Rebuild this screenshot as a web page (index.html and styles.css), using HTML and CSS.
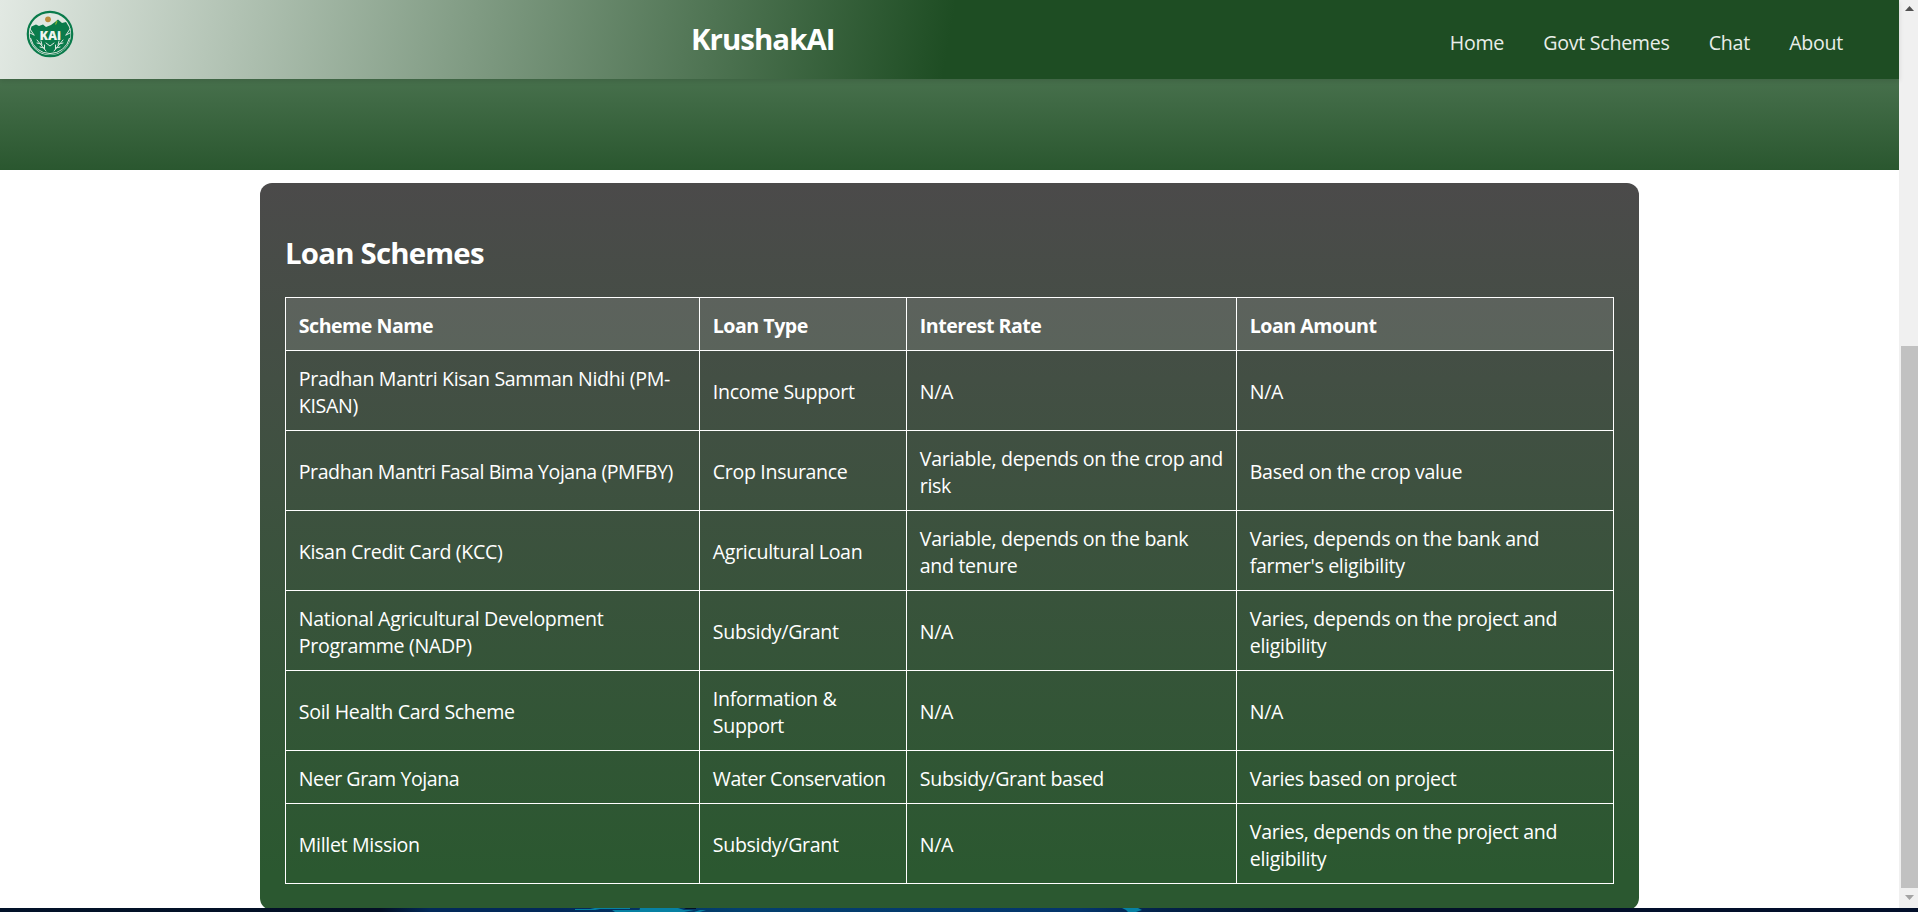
FILE: index.html
```html
<!DOCTYPE html>
<html lang="en">
<head>
<meta charset="utf-8">
<title>KrushakAI</title>
<link rel="stylesheet" href="styles.css">
</head>
<body>
<div class="window">
  <div class="page">
    <header class="header">
      <svg class="logo" viewBox="0 0 48 48">
        <circle cx="24" cy="24" r="22.2" fill="#dfe7e0" stroke="#0a7b4b" stroke-width="2.2"/>
        <path d="M5.500 16.500 L10 14.500 13 16 17 14.500 20 17 25 15 29 12 32 9.500 36 13 40 12 43 17 A20.300 20.300 0 1 1 5.500 16.500Z" fill="#0a7b4b"/>
        <path d="M4.500 28 A20 20 0 0 0 43.500 28" fill="none" stroke="#dfe7e0" stroke-width="1"/>
        <circle cx="22" cy="9.300" r="2.900" fill="#b98c3c"/>
        <path d="M29.500 14.500 L31 11" stroke="#8bb52f" stroke-width="1.200"/>
        <path d="M4 19l4 6M4 23l4 2M44 19l-4 6M44 23l-4 2M11 30l9 11M11 33l4 1M15 31l1 4M14 37l4 1M18.500 35l0 4M37 30l-9 11M37 33l-4 1M33 31l-1 4M34 37l-4 1M29.500 35l0 4M20 33l4 3 4-3" fill="none" stroke="#dfe7e0" stroke-width="1" stroke-linecap="round"/>
        <text class="logo-text" x="13.500" y="29.500" textLength="21.500" lengthAdjust="spacingAndGlyphs">KAi</text>
      </svg>
      <div class="brand">KrushakAI</div>
      <nav class="nav">
        <a>Home</a><a>Govt Schemes</a><a>Chat</a><a>About</a>
      </nav>
    </header>
    <div class="band"></div>
    <main class="main">
      <section class="card">
        <h2 class="title">Loan Schemes</h2>
        <table class="table">
          <colgroup><col class="c1"><col class="c2"><col class="c3"><col class="c4"></colgroup>
          <thead>
            <tr class="short"><th>Scheme Name</th><th>Loan Type</th><th>Interest Rate</th><th>Loan Amount</th></tr>
          </thead>
          <tbody>
            <tr><td>Pradhan Mantri Kisan Samman Nidhi (PM-<br>KISAN)</td><td>Income Support</td><td>N/A</td><td>N/A</td></tr>
            <tr><td class="tight">Pradhan Mantri Fasal Bima Yojana (PMFBY)</td><td>Crop Insurance</td><td>Variable, depends on the crop and<br>risk</td><td>Based on the crop value</td></tr>
            <tr><td>Kisan Credit Card (KCC)</td><td>Agricultural Loan</td><td>Variable, depends on the bank<br>and tenure</td><td>Varies, depends on the bank and<br>farmer's eligibility</td></tr>
            <tr><td>National Agricultural Development<br>Programme (NADP)</td><td>Subsidy/Grant</td><td>N/A</td><td>Varies, depends on the project and<br>eligibility</td></tr>
            <tr><td>Soil Health Card Scheme</td><td>Information &amp;<br>Support</td><td>N/A</td><td>N/A</td></tr>
            <tr class="short"><td class="tight">Neer Gram Yojana</td><td class="tight">Water Conservation</td><td>Subsidy/Grant based</td><td>Varies based on project</td></tr>
            <tr><td>Millet Mission</td><td>Subsidy/Grant</td><td>N/A</td><td>Varies, depends on the project and<br>eligibility</td></tr>
          </tbody>
        </table>
      </section>
    </main>
  </div>
  <div class="scrollbar">
    <svg class="arrow" viewBox="0 0 9 5"><path d="M0 5L4.500 0 9 5z" fill="#505050"/></svg>
    <div class="thumb"></div>
    <svg class="arrow" viewBox="0 0 9 5"><path d="M0 0L4.500 5 9 0z" fill="#a3a3a3"/></svg>
  </div>
</div>
<div class="desktop">
  <svg class="waves" viewBox="0 0 1918 4" preserveAspectRatio="none">
    <path d="M575 1h25l-5 1h-20zM590 0h40v1h-35zM612 2h38l-10 2h-25zM640 0h38l6 2h10l-10 2h-45zM700 2h6l-6 2h-6zM1122 0h16l4 2-6 2h-8l-2-2z" fill="#0781a3"/>
    <path d="M684 0h12v1h-10z" fill="#021126"/>
  </svg>
</div>
</body>
</html>
```
FILE: styles.css
```css
* { box-sizing: border-box; }
body {
  margin: 0;
  height: 912px;
  overflow: hidden;
  background: #fff;
  color: #fff;
  font-family: "Open Sans", "Noto Sans", sans-serif;
  font-size: 19.6px;
  line-height: 27px;
}
.window { display: flex; height: 908px; overflow: hidden; }
.page { width: 1899px; display: flex; flex-direction: column; }
.header {
  flex: none;
  height: 79px;
  display: grid;
  grid-template-columns: 691px 1fr auto;
  padding-right: 56px;
  background: linear-gradient(100deg, #e2e9e3 0%, #1e4d23 50%);
  box-shadow: 0 2px 5px rgba(0, 0, 0, 0.12);
  z-index: 1;
}
.logo { width: 48px; height: 48px; margin: 10px 0 0 26px; }
.logo-text { font: 800 12px "Open Sans", sans-serif; fill: #f0f4f0; }
.brand { font-size: 29.4px; font-weight: 700; line-height: 40px; padding-top: 19px; letter-spacing: -0.95px; }
.nav { display: flex; gap: 39.3px; padding-top: 29px; color: #e8eee9; letter-spacing: -0.28px; }
.band { flex: none; height: 91px; background: linear-gradient(#47704c, #2a572f); }
.main { padding: 13px 0 0 260px; }
.card {
  width: 1379px;
  height: 727px;
  padding: 50px 25px 0;
  border-radius: 12px;
  background: linear-gradient(#4b4a4a, #434f44 27%, #2b5830 95%);
}
.title { margin: 0; height: 64px; font-size: 29.4px; line-height: 40px; letter-spacing: -0.8px; }
.table { width: 1329px; table-layout: fixed; border-collapse: collapse; letter-spacing: -0.33px; }
.c1 { width: 414px; }
.c2 { width: 207px; }
.c3 { width: 330px; }
.c4 { width: 377px; }
.table th, .table td {
  height: 80px;
  padding: 2px 12.8px 0;
  border: 1px solid #fff;
  text-align: left;
  vertical-align: middle;
  white-space: nowrap;
}
.table .short th, .table .short td { height: 53px; }
.table th { background: rgba(255, 255, 255, 0.12); letter-spacing: -0.5px; }
.table .tight { letter-spacing: -0.46px; }
.scrollbar {
  width: 19px;
  padding: 6px 0 8px 2px;
  background: #f0f0f0;
  display: flex;
  flex-direction: column;
}
.arrow { width: 9px; height: 5px; margin-left: 4px; }
.thumb { height: 542px; margin: 335px 0 7px; background: #c1c1c1; }
.desktop {
  height: 4px;
  background: linear-gradient(90deg, #021229 0, #030f25 380px, #02295a 430px, #02295a 560px, #03406f 740px, #04356c 1080px, #03224a 1160px, #020f2a 1300px, #020f2a);
}
.waves { display: block; width: 1918px; height: 4px; }
```
